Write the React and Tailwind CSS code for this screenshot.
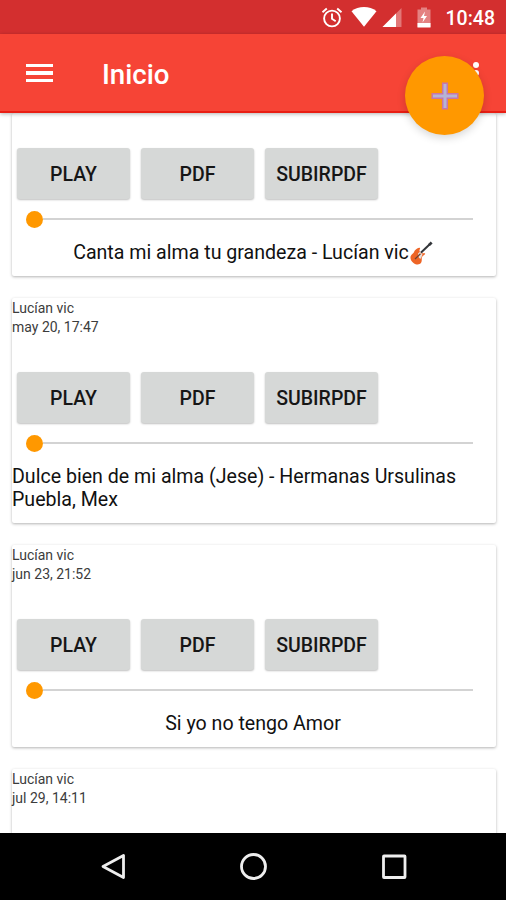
const songs = [
  { id: 1, title: 'Canta mi alma tu grandeza - Lucían vic', center: true, guitar: true },
  { id: 2, author: 'Lucían vic', date: 'may 20, 17:47', title: 'Dulce bien de mi alma (Jese) - Hermanas Ursulinas Puebla, Mex' },
  { id: 3, author: 'Lucían vic', date: 'jun 23, 21:52', title: 'Si yo no tengo Amor', center: true },
  { id: 4, author: 'Lucían vic', date: 'jul 29, 14:11' },
];

function Guitar() {
  return (
    <svg className="h-6 w-6 shrink-0" viewBox="0 0 24 24">
      <path d="M10 13.500 21 3" stroke="#33363a" strokeWidth="2" />
      <path d="m19 3.200 2.700-2.600 1.900 2-2.700 2.500z" fill="#33363a" />
      <path d="M5.600 9.800c1.200-1.800 4.200-3.600 5.300-2.900.8.5-.9 2.300-.3 3.300.6 1.200 1.700 2.200 3 2.100 1.600-.1 2.900-.3 2.500.8-.6 1.400-2.700 1.500-3.200 3.300-.4 1.700.3 3.900-.9 5.600-1.500 1.900-4.900 1.900-7.500-.1-2.900-2.100-3.900-6-2.300-7.700 1-1.200 2.400-1.600 3.400-4.400z" fill="#ee6526" />
      <path d="m9 12.500 2-1.800 2.500 2.800-1.700 4.300-1.800-.7z" fill="#e9ded8" />
      <path d="m6 18 5.500-5.200" stroke="#70402f" strokeWidth="1.200" />
    </svg>
  );
}

function SongButton({ children }) {
  return (
    <button className="h-[51px] w-[113px] rounded-[3px] bg-[#d6d8d7] pt-0.5 text-[19.5px] font-medium text-[#161616] shadow-[0_1px_2px_rgba(0,0,0,0.25)]">
      {children}
    </button>
  );
}

function SongPlayer({ song }) {
  return (
    <>
      <div className="flex gap-[11px] pl-[5px]">
        <SongButton>PLAY</SongButton>
        <SongButton>PDF</SongButton>
        <SongButton>SUBIRPDF</SongButton>
      </div>
      <div className="flex h-[42px] items-center pr-[23px] pb-0.5 pl-3.5">
        <span className="h-[17px] w-[17px] rounded-full bg-[#ff9800]" />
        <span className="h-0.5 flex-1 bg-[#d3d3d3]" />
      </div>
      <div className={song.center ? 'flex h-[23px] items-center justify-center pr-0.5' : 'flex'}>
        <p className="text-[19.6px] leading-[23px] text-[#111]">{song.title}</p>
        {song.guitar && <Guitar />}
      </div>
    </>
  );
}

function SongCard({ song }) {
  return (
    <article
      className={`shrink-0 rounded-[2px] bg-white shadow-[0_1px_3px_rgba(0,0,0,0.3)] ${song.title ? 'pb-3' : 'h-20'}`}
    >
      {song.author ? (
        <div className="h-[74px] pt-px text-[14px] leading-[19px] text-[#3c3c3c]">
          <p>{song.author}</p>
          <p>{song.date}</p>
        </div>
      ) : (
        <div className="h-[35px]" />
      )}
      {song.title && <SongPlayer song={song} />}
    </article>
  );
}

function StatusBar() {
  return (
    <div className="flex h-[34px] shrink-0 items-center justify-end bg-[#d32f2f] pr-[11px] text-white">
      <svg className="h-[34px] w-[124px]" viewBox="318 0 124 34" fill="none">
        <g stroke="#fff" strokeWidth="1.900">
          <circle cx="332" cy="18.500" r="7.900" />
          <path d="M332 13.500v5.300l3.700 2.400M322.500 12.200l4.300-3.700M341.500 12.200l-4.300-3.700" />
        </g>
        <path d="M351.500 11.200c7-5.600 18-5.600 25 0L364 26.800z" fill="#fff" />
        <path d="M401.500 8v19h-19z" fill="#fff" fillOpacity=".35" />
        <path d="M396 13.500V27h-13.500z" fill="#fff" />
        <path d="M417.500 9.500h3.500V7.500h6v2h3.500V27h-13z" fill="#fff" fillOpacity=".4" />
        <path d="M417.500 23h13v4.500h-13z" fill="#fff" />
        <path d="m425 11.500-4.500 6.500h3l-1 4.500 4.500-6.500h-3z" fill="#fff" />
      </svg>
      <span className="w-[53px] pt-[3px] text-right text-[19.5px] leading-6 font-medium whitespace-nowrap">10:48</span>
    </div>
  );
}

export default function App() {
  return (
    <div className="relative flex h-[900px] w-[506px] flex-col overflow-hidden bg-white font-[Roboto,'Liberation_Sans',sans-serif]">
      <StatusBar />
      <header className="z-10 flex h-[79px] shrink-0 items-center border-b-2 border-[#e91e14] bg-[#f64436] pl-[26px] pt-px text-white shadow-[0_1px_4px_rgba(0,0,0,0.3)]">
        <div className="flex w-[27px] flex-col gap-1">
          <span className="h-[3.500px] bg-white" />
          <span className="h-[3.500px] bg-white" />
          <span className="h-[3.500px] bg-white" />
        </div>
        <h1 className="ml-[49px] flex-1 pt-1 text-[27.7px] font-medium">Inicio</h1>
        <div className="mr-[27px] flex flex-col gap-0.5">
          <span className="h-1.5 w-1.5 rounded-full bg-white" />
          <span className="h-1.5 w-1.5 rounded-full bg-white" />
          <span className="h-1.5 w-1.5 rounded-full bg-white" />
        </div>
      </header>
      <button className="absolute top-[56px] left-[405px] z-20 flex h-[79px] w-[79px] items-center justify-center rounded-full bg-[#ff9800] shadow-[0_3px_8px_rgba(0,0,0,0.16)]">
        <svg className="h-8 w-8" viewBox="0 0 32 32">
          <path d="M13.700 3.200h4.600v10.500h10.500v4.600H18.300v10.500h-4.600V18.300H3.200v-4.600h10.500z" fill="#b5b4d6" stroke="#c777a6" strokeWidth="1.500" />
        </svg>
      </button>
      <main className="flex h-[720px] shrink-0 flex-col gap-[22px] overflow-hidden pr-2.5 pl-3">
        {songs.map((song) => (
          <SongCard key={song.id} song={song} />
        ))}
      </main>
      <nav className="z-10 h-[67px] shrink-0 bg-black">
        <svg className="h-[67px] w-[506px]" viewBox="0 0 506 67" fill="none" stroke="#eee" strokeWidth="2.800">
          <path d="M123.500 22.500v22L103 33.500z" strokeLinejoin="round" />
          <circle cx="253.500" cy="33.500" r="12" />
          <rect x="383.500" y="23" width="21.500" height="21.500" rx=".5" />
        </svg>
      </nav>
    </div>
  );
}
